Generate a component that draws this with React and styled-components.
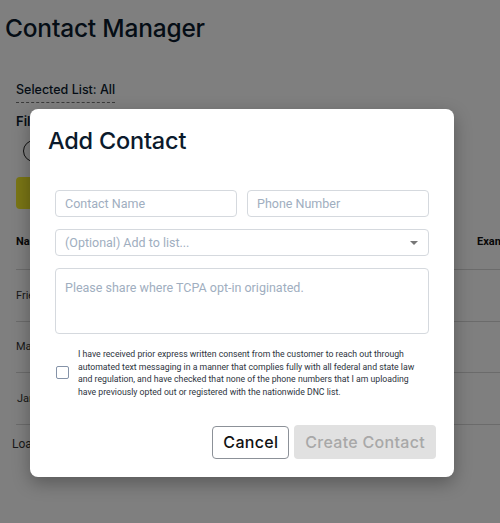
import React from 'react';
import styled, { createGlobalStyle } from 'styled-components';

const navy = "#0b1a2c";
const placeholder = "#a0aec0";
const fieldBorder = "#d5d9de";

const GlobalStyle = createGlobalStyle`
    html, body {
        margin: 0;
        padding: 0;
        background: #ffffff;
        overflow: hidden;
    }
    body {
        font-family: Roboto, "Liberation Sans", sans-serif;
    }
`;

const Page = styled.div`
    width: 500px;
    height: 523px;
    overflow: hidden;
    position: relative;
`;

const Title = styled.h1`
    margin: 0;
    padding: 13px 0 0 5px;
    font-family: Inter, "Noto Sans", sans-serif;
    font-size: 24.5px;
    line-height: 30px;
    font-weight: 500;
    letter-spacing: -0.2px;
    color: ${navy};
`;

const SelectedList = styled.div`
    display: inline-block;
    margin: 39px 0 0 16px;
    padding-bottom: 4px;
    border-bottom: 1px dashed #777;
    font-family: Inter, "Noto Sans", sans-serif;
    font-size: 12.5px;
    line-height: 16px;
    font-weight: 500;
    color: ${navy};
`;

const FilterLabel = styled.div`
    margin: 10px 0 0 16px;
    font-family: Inter, "Noto Sans", sans-serif;
    font-size: 13px;
    line-height: 16px;
    font-weight: 600;
    color: ${navy};
`;

const Toggle = styled.div`
    margin: 11px 0 0 23px;
    width: 20px;
    height: 20px;
    border-radius: 50%;
    border: 1px solid #222;
`;

const AddButton = styled.div`
    margin: 15px 0 0 16px;
    width: 90px;
    height: 32px;
    border-radius: 4px;
    background: #f2ea2a;
`;

const Table = styled.div`
    margin-top: 12px;
    margin-left: 16px;
    width: 560px;
`;

const HeadRow = styled.div`
    display: grid;
    grid-template-columns: 461px auto;
    height: 49px;
    padding-bottom: 8px;
    box-sizing: border-box;
    align-items: center;
    border-bottom: 1px solid #d6d6d6;
    font-size: 11px;
    font-weight: 700;
    color: #111;
`;

const Row = styled.div`
    height: 51.5px;
    box-sizing: border-box;
    display: flex;
    align-items: center;
    padding-left: ${p => p.indent || 0}px;
    border-bottom: 1px solid #d6d6d6;
    font-size: 11px;
    color: #333;
`;

const Footer = styled.div`
    margin: 12px 0 0 12px;
    font-size: 12px;
    color: #333;
`;

const Overlay = styled.div`
    position: absolute;
    inset: 0;
    background: rgba(0, 0, 0, 0.5);
    padding: 109px 0 0 30px;
`;

const Modal = styled.div`
    width: 424px;
    height: 368px;
    box-sizing: border-box;
    background: #fff;
    border-radius: 8px;
    box-shadow: 0 6px 18px rgba(0, 0, 0, 0.3);
    display: flex;
    flex-direction: column;
`;

const ModalTitle = styled.h2`
    margin: 0;
    padding: 18px 18px 0 18px;
    font-family: Inter, "Noto Sans", sans-serif;
    font-size: 23.5px;
    line-height: 28px;
    font-weight: 500;
    letter-spacing: -0.2px;
    color: ${navy};
`;

const Body = styled.div`
    padding: 35px 25px 0 25px;
    display: flex;
    flex-direction: column;
    gap: 12px;
`;

const FieldRow = styled.div`
    display: flex;
    gap: 10px;
    & > * {
        flex: 1;
    }
`;

const Field = styled.div`
    height: ${p => p.tall ? 66 : 27}px;
    box-sizing: border-box;
    border: 1px solid ${fieldBorder};
    border-radius: 4px;
    display: flex;
    align-items: ${p => p.tall ? 'flex-start' : 'center'};
    justify-content: space-between;
    padding: ${p => p.tall ? '11px 9px' : '0 9px'};
    font-size: 12.5px;
    color: ${placeholder};
`;

const Caret = styled.span`
    width: 0;
    height: 0;
    border-left: 4px solid transparent;
    border-right: 4px solid transparent;
    border-top: 4px solid #777;
    margin-right: 1px;
`;

const Consent = styled.label`
    display: flex;
    align-items: center;
    gap: 9px;
    margin-top: 2px;
    padding-left: 1px;
`;

const Box = styled.span`
    flex: none;
    width: 13px;
    height: 13px;
    box-sizing: border-box;
    border: 1.5px solid #8593a8;
    border-radius: 2px;
    margin-top: -2px;
`;

const ConsentText = styled.p`
    margin: 0;
    font-size: 8.7px;
    line-height: 12.7px;
    color: #2d3440;
    white-space: nowrap;
`;

const Actions = styled.div`
    margin-top: auto;
    display: flex;
    justify-content: flex-end;
    align-items: center;
    gap: 5px;
    padding: 0 18px 18px 0;
`;

const Button = styled.button`
    height: ${p => p.primary ? 34 : 33}px;
    padding: 0 ${p => p.primary ? 11 : 10}px;
    border-radius: 4px;
    border: ${p => p.primary ? 'none' : '1px solid #8c9198'};
    background: ${p => p.primary ? '#e1e1e1' : '#fff'};
    color: ${p => p.primary ? '#a8a8a8' : '#111'};
    font-family: Inter, "Noto Sans", sans-serif;
    font-size: 16px;
    font-weight: 500;
    letter-spacing: 0.3px;
    cursor: pointer;
`;

export default function App() {
    return (
        <Page>
            <GlobalStyle />
            <Title>Contact Manager</Title>
            <SelectedList>Selected List: All</SelectedList>
            <FilterLabel>Filters</FilterLabel>
            <Toggle />
            <AddButton />
            <Table>
                <HeadRow>
                    <span>Name</span>
                    <span>Example</span>
                </HeadRow>
                <Row>Friend</Row>
                <Row>Mark</Row>
                <Row indent={1}>Jane</Row>
            </Table>
            <Footer>Loading</Footer>

            <Overlay>
                <Modal>
                    <ModalTitle>Add Contact</ModalTitle>
                    <Body>
                        <FieldRow>
                            <Field>Contact Name</Field>
                            <Field>Phone Number</Field>
                        </FieldRow>
                        <Field>(Optional) Add to list...<Caret /></Field>
                        <Field tall>Please share where TCPA opt-in originated.</Field>
                        <Consent>
                            <Box />
                            <ConsentText>
                                I have received prior express written consent from the customer to reach out through<br />
                                automated text messaging in a manner that complies fully with all federal and state law<br />
                                and regulation, and have checked that none of the phone numbers that I am uploading<br />
                                have previously opted out or registered with the nationwide DNC list.
                            </ConsentText>
                        </Consent>
                    </Body>
                    <Actions>
                        <Button>Cancel</Button>
                        <Button primary>Create Contact</Button>
                    </Actions>
                </Modal>
            </Overlay>
        </Page>
    );
}
